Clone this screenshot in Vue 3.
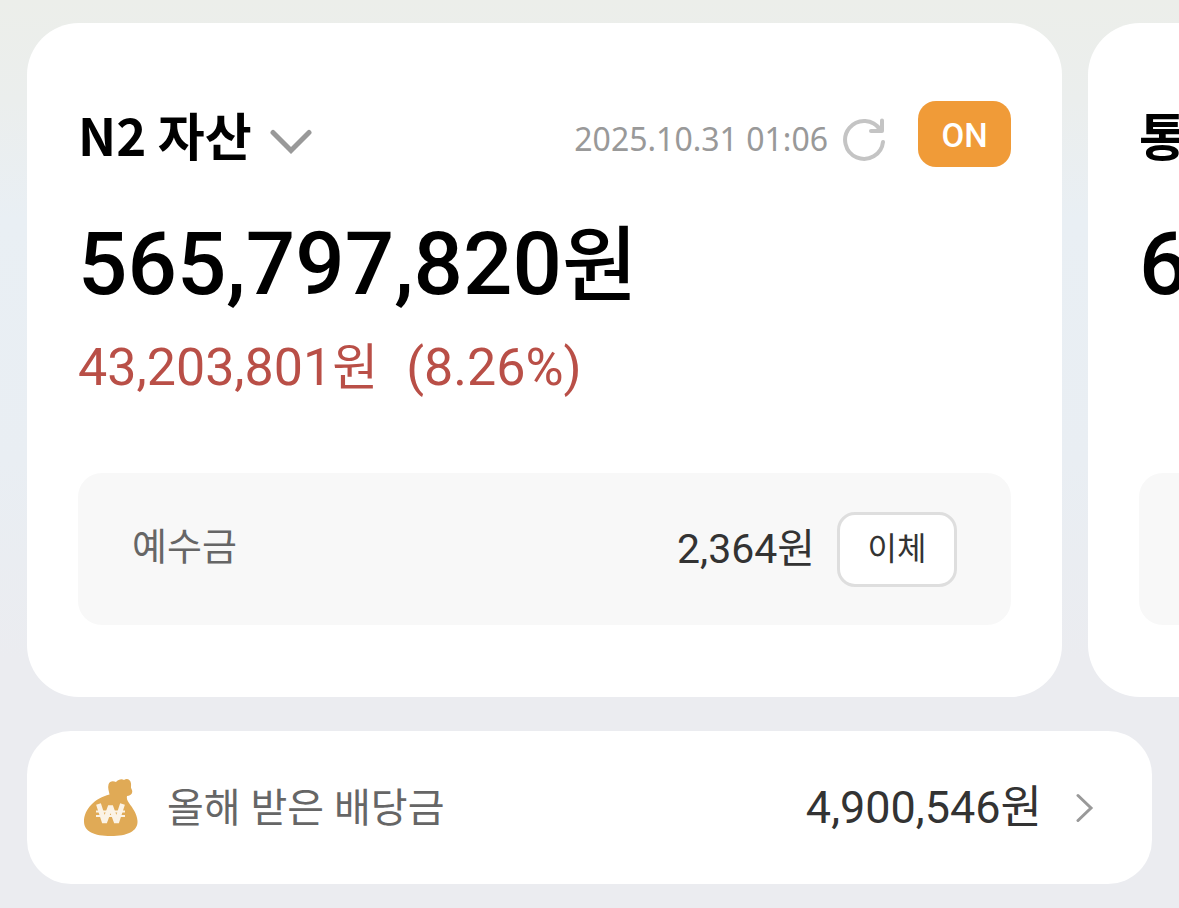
<template>
  <main class="page">
    <section class="carousel" aria-label="자산">
      <article v-for="card in cards" :key="card.id" class="card">
        <header class="card-head">
          <button type="button" class="title-btn">
            <h2 class="title">{{ card.title }}</h2>
            <svg class="chevron-down" viewBox="0 0 42 28" aria-hidden="true">
              <path d="M3 4.5 21 22.5 39 4.5" />
            </svg>
          </button>
          <div class="card-tools">
            <time class="updated">{{ card.updated }}</time>
            <button type="button" class="refresh-btn" aria-label="새로고침">
              <svg class="refresh" viewBox="0 0 44 44" aria-hidden="true">
                <path d="M41 24A19 19 0 1 1 38 11.500" />
                <path d="M40 2.500V13H29" />
              </svg>
            </button>
            <button
              type="button"
              class="toggle"
              :aria-pressed="card.on"
              @click="card.on = !card.on"
            >
              {{ card.on ? 'ON' : 'OFF' }}
            </button>
          </div>
        </header>

        <p class="total">{{ card.total }}<span class="won">원</span></p>
        <p class="profit">
          <template v-if="card.profit">
            <span>{{ card.profit }}<span class="won">원</span></span>
            <span>({{ card.rate }})</span>
          </template>
        </p>

        <div class="deposit">
          <span class="deposit-label">예수금</span>
          <span class="deposit-value">{{ card.deposit }}<span class="won">원</span></span>
          <button type="button" class="transfer-btn">이체</button>
        </div>
      </article>
    </section>

    <a href="#dividend" class="dividend">
      <svg class="bag" viewBox="0 0 56 60" aria-hidden="true">
        <path
          class="bag-body"
          d="M26.500 16.500C26 13 24.500 10 25.500 6.500C26.500 3 30 2.500 33 4C35.500 1 39 .500 41 2C44 0 47.500 1.500 48 5.500C48.300 8 47.500 9 48.500 11C50.500 14.500 48.500 17.500 44 18C43.500 20 44 22 46 25C49.500 30 54 35.500 54.500 43C55 53.500 44 58 28 58C11 58 1 53.500 1 43.500C1 31 12 20 26.500 16.500Z"
        />
        <path class="bag-won" d="M15.500 26 21.500 44.500 27.500 28 33.500 44.500 39.500 26" />
        <path class="bag-bar" d="M13 33.500H42M13 38H42" />
      </svg>
      <span class="dividend-label">올해 받은 배당금</span>
      <span class="dividend-value">4,900,546<span class="won">원</span></span>
      <svg class="chevron-right" viewBox="0 0 18 30" aria-hidden="true">
        <path d="M2 2.500 15 15 2 27.500" />
      </svg>
    </a>
  </main>
</template>

<script setup>
import { ref } from 'vue'

const cards = ref([
  {
    id: 'n2',
    title: 'N2 자산',
    updated: '2025.10.31 01:06',
    on: true,
    total: '565,797,820',
    profit: '43,203,801',
    rate: '8.26%',
    deposit: '2,364'
  },
  {
    id: 'all',
    title: '통',
    updated: '',
    on: true,
    total: '6',
    profit: '',
    rate: '',
    deposit: ''
  }
])
</script>

<style>
body {
  margin: 0;
}
</style>

<style scoped>
.page {
  box-sizing: border-box;
  min-height: 100vh;
  padding: 23px 27px 24px;
  overflow: hidden;
  background: linear-gradient(#eceeea 0, #ebeeed 100px, #e9eff4 220px, #e9eef3 460px, #ebecf0 660px);
  color: #000;
  font-family: Roboto, 'Noto Sans CJK KR', sans-serif;
}

button {
  margin: 0;
  padding: 0;
  border: 0;
  background: none;
  color: inherit;
  font-family: inherit;
  cursor: pointer;
}

svg {
  display: block;
  flex: none;
  fill: none;
}

.carousel {
  display: flex;
  gap: 26px;
}

.card {
  box-sizing: border-box;
  flex: 0 0 92%;
  padding: 76px 51px 72px;
  border-radius: 52px;
  background: #fff;
}

.card-head {
  display: flex;
  align-items: center;
  justify-content: space-between;
  height: 70px;
}

.title-btn {
  display: flex;
  align-items: center;
  gap: 18px;
}

.title {
  margin: 0;
  font-family: 'Noto Sans CJK KR', sans-serif;
  font-size: 51px;
  font-weight: 700;
  line-height: 70px;
  white-space: nowrap;
}

.chevron-down {
  width: 42px;
  height: 28px;
  margin-top: 16px;
  stroke: #999;
  stroke-width: 5;
  stroke-linecap: round;
}

.card-tools {
  display: flex;
  align-items: center;
}

.updated {
  padding-top: 8px;
  color: #999;
  font-family: 'Noto Sans', sans-serif;
  font-size: 32px;
  white-space: nowrap;
}

.refresh-btn {
  margin: 0 32px 0 14px;
  padding-top: 12px;
}

.refresh {
  width: 44px;
  height: 44px;
  stroke: #c4c4c4;
  stroke-width: 4;
  stroke-linecap: round;
  stroke-linejoin: round;
}

.toggle {
  width: 93px;
  height: 66px;
  padding-top: 2px;
  border-radius: 18px;
  background: #f09b38;
  color: #fff;
  font-size: 33px;
  font-weight: 500;
}

.total {
  margin: 40px 0 0;
  font-size: 87px;
  font-weight: 500;
  line-height: 110px;
  white-space: nowrap;
}

.total .won {
  font-size: 82px;
}

.profit {
  display: flex;
  gap: 28px;
  height: 70px;
  margin: 12px 0 0;
  color: #b94f47;
  font-size: 52px;
  line-height: 70px;
  white-space: nowrap;
}

.profit .won {
  font-size: 50px;
}

.deposit {
  display: flex;
  align-items: center;
  height: 152px;
  margin-top: 70px;
  padding: 0 54px;
  border-radius: 24px;
  background: #f8f8f8;
}

.deposit-label {
  flex: 1;
  padding-bottom: 12px;
  color: #666;
  font-size: 38px;
}

.deposit-value {
  padding-bottom: 8px;
  color: #333;
  font-size: 41px;
}

.transfer-btn {
  box-sizing: border-box;
  width: 120px;
  height: 75px;
  margin-left: 22px;
  padding-bottom: 6px;
  border: 3px solid #dedede;
  border-radius: 18px;
  background: #fff;
  color: #333;
  font-size: 32px;
}

.dividend {
  display: flex;
  align-items: center;
  height: 153px;
  margin-top: 34px;
  padding: 0 58px 0 56px;
  border-radius: 44px;
  background: #fff;
  text-decoration: none;
}

.bag {
  width: 56px;
  height: 60px;
}

.bag-body {
  fill: #e0aa56;
}

.bag-won {
  stroke: #fbf3e6;
  stroke-width: 5;
  stroke-linejoin: bevel;
}

.bag-bar {
  stroke: #fbf3e6;
  stroke-width: 2;
}

.dividend-label {
  flex: 1;
  margin-left: 28px;
  padding-bottom: 6px;
  color: #666;
  font-size: 40px;
}

.dividend-value {
  padding-bottom: 8px;
  color: #333;
  font-size: 45px;
}

.chevron-right {
  width: 18px;
  height: 30px;
  margin-left: 34px;
  stroke: #999;
  stroke-width: 3;
  stroke-linecap: round;
}
</style>
